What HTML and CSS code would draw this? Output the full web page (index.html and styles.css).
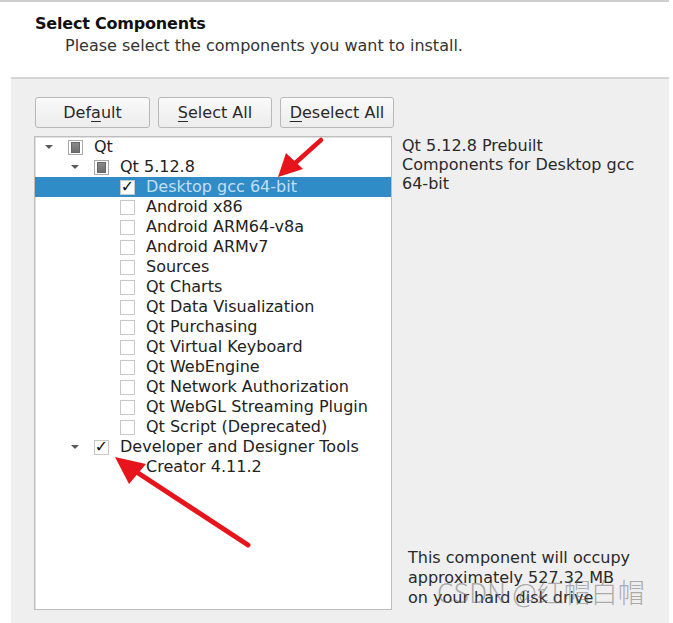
FILE: index.html
```html
<!DOCTYPE html>
<html>
<head>
<meta charset="utf-8">
<link rel="stylesheet" href="styles.css">
</head>
<body>
<div class="window">
  <div class="header">
    <div class="title">Select Components</div>
    <div class="subtitle">Please select the components you want to install.</div>
  </div>
  <div class="panel">
    <div class="buttons">
      <button class="btn b1">Def<u>a</u>ult</button>
      <button class="btn b2"><u>S</u>elect All</button>
      <button class="btn b3"><u>D</u>eselect All</button>
    </div>
    <div class="content">
      <div class="tree">
        <div class="row l0"><span class="tri"></span><span class="cb partial"></span><span class="lbl">Qt</span></div>
        <div class="row l1"><span class="tri"></span><span class="cb partial"></span><span class="lbl">Qt 5.12.8</span></div>
        <div class="row l2 sel"><span class="tri none"></span><span class="cb checked">✓</span><span class="lbl">Desktop gcc 64-bit</span></div>
        <div class="row l2"><span class="tri none"></span><span class="cb"></span><span class="lbl">Android x86</span></div>
        <div class="row l2"><span class="tri none"></span><span class="cb"></span><span class="lbl">Android ARM64-v8a</span></div>
        <div class="row l2"><span class="tri none"></span><span class="cb"></span><span class="lbl">Android ARMv7</span></div>
        <div class="row l2"><span class="tri none"></span><span class="cb"></span><span class="lbl">Sources</span></div>
        <div class="row l2"><span class="tri none"></span><span class="cb"></span><span class="lbl">Qt Charts</span></div>
        <div class="row l2"><span class="tri none"></span><span class="cb"></span><span class="lbl">Qt Data Visualization</span></div>
        <div class="row l2"><span class="tri none"></span><span class="cb"></span><span class="lbl">Qt Purchasing</span></div>
        <div class="row l2"><span class="tri none"></span><span class="cb"></span><span class="lbl">Qt Virtual Keyboard</span></div>
        <div class="row l2"><span class="tri none"></span><span class="cb"></span><span class="lbl">Qt WebEngine</span></div>
        <div class="row l2"><span class="tri none"></span><span class="cb"></span><span class="lbl">Qt Network Authorization</span></div>
        <div class="row l2"><span class="tri none"></span><span class="cb"></span><span class="lbl">Qt WebGL Streaming Plugin</span></div>
        <div class="row l2"><span class="tri none"></span><span class="cb"></span><span class="lbl">Qt Script (Deprecated)</span></div>
        <div class="row l1"><span class="tri"></span><span class="cb checked">✓</span><span class="lbl">Developer and Designer Tools</span></div>
        <div class="row l2"><span class="tri none"></span><span class="cb hidden"></span><span class="lbl">Creator 4.11.2</span></div>
      </div>
      <div class="info">
        <div class="desc">Qt 5.12.8 Prebuilt<br>Components for Desktop gcc<br>64-bit</div>
        <div class="size">This component will occupy<br>approximately 527.32 MB<br>on your hard disk drive</div>
      </div>
    </div>
  </div>
  <div class="watermark">CSDN @红帽白帽</div>
  <svg class="arrows" width="673" height="623" viewBox="0 0 673 623">
    <line x1="321" y1="140" x2="292" y2="166" stroke="#e8141c" stroke-width="4.5" stroke-linecap="round"/>
    <polygon points="278,177 286,153 303,169" fill="#e8141c"/>
    <line x1="248" y1="545" x2="135" y2="471" stroke="#e8141c" stroke-width="5" stroke-linecap="round"/>
    <polygon points="115,457 146,464 129,484" fill="#e8141c"/>
  </svg>
</div>
</body>
</html>
```
FILE: styles.css
```css
* { box-sizing: border-box; }
html, body { margin: 0; padding: 0; background: #ffffff; }
body {
  font-family: "DejaVu Sans", "Noto Sans", sans-serif;
  font-size: 16px;
  color: #2a2a2a;
  width: 673px;
  height: 623px;
  overflow: hidden;
}
.window {
  position: relative;
  width: 673px;
  height: 623px;
}
.header {
  width: 669px;
  border-top: 2px solid #cfcfcf;
  padding: 12px 0 21px 35px;
  background: #ffffff;
}
.title {
  font-weight: 700;
  line-height: 20px;
  color: #111;
  letter-spacing: -0.2px;
}
.subtitle {
  margin-top: 2px;
  margin-left: 30px;
  line-height: 20px;
  color: #333;
}
.panel {
  margin-left: 11px;
  width: 658px;
  height: 546px;
  border-top: 2px solid #d6d6d6;
  background: #efefef;
  padding: 18px 0 0 24px;
}
.buttons {
  display: flex;
  gap: 8px;
  height: 31px;
}
.btn {
  font-family: inherit;
  font-size: 16px;
  color: #2a2a2a;
  height: 31px;
  border: 1px solid #b8b8b8;
  border-radius: 3px;
  background: linear-gradient(#fafafa, #ececec);
  padding: 0;
  line-height: 20px;
}
.btn u { text-underline-offset: 3px; }
.b1 { width: 115px; }
.b2 { width: 114px; }
.b3 { width: 114px; }
.content {
  display: flex;
  margin-top: 8px;
  margin-left: -1px;
}
.tree {
  width: 358px;
  height: 474px;
  background: #ffffff;
  border: 1px solid #bdbdbd;
  box-shadow: inset 1px 1px 0 #e2e2e2;
}
.row {
  display: flex;
  align-items: center;
  height: 20px;
  line-height: 20px;
  white-space: nowrap;
  color: #222;
}
.l0 { padding-left: 7px; }
.l1 { padding-left: 33px; }
.l2 { padding-left: 59px; }
.tri {
  width: 14px;
  height: 20px;
  margin-right: 12px;
  position: relative;
}
.tri::after {
  content: "";
  position: absolute;
  left: 3px;
  top: 8px;
  border-left: 4px solid transparent;
  border-right: 4px solid transparent;
  border-top: 4px solid #5a5a5a;
}
.tri.none::after { display: none; }
.cb {
  width: 15px;
  height: 15px;
  margin-right: 11px;
  border: 1px solid #c8c8c8;
  background: #ffffff;
  display: flex;
  align-items: center;
  justify-content: center;
  font-size: 16px;
  font-weight: 700;
  line-height: 1;
  color: #111;
  font-family: "DejaVu Sans", sans-serif;
}
.cb.partial {
  border-color: #a8a8a8;
  padding: 2px;
}
.cb.partial::after {
  content: "";
  width: 9px;
  height: 9px;
  background: linear-gradient(#8a8a8a, #6e6e6e);
  border: 1px solid #666;
}
.cb.hidden { visibility: hidden; }
.sel { background: #308cc6; }
.sel .lbl { color: #c4def2; }
.info {
  margin-left: 10px;
  display: flex;
  flex-direction: column;
  justify-content: space-between;
  height: 474px;
}
.desc {
  line-height: 19px;
}
.size {
  margin-left: 6px;
  line-height: 20px;
  padding-bottom: 2px;
}
.watermark {
  position: absolute;
  left: 437px;
  top: 574px;
  font-family: "Noto Sans CJK SC", sans-serif;
  font-size: 27px;
  font-weight: 300;
  line-height: 36px;
  color: rgba(110, 110, 110, 0.55);
  white-space: nowrap;
}
.arrows {
  position: absolute;
  left: 0;
  top: 0;
  pointer-events: none;
}
```
